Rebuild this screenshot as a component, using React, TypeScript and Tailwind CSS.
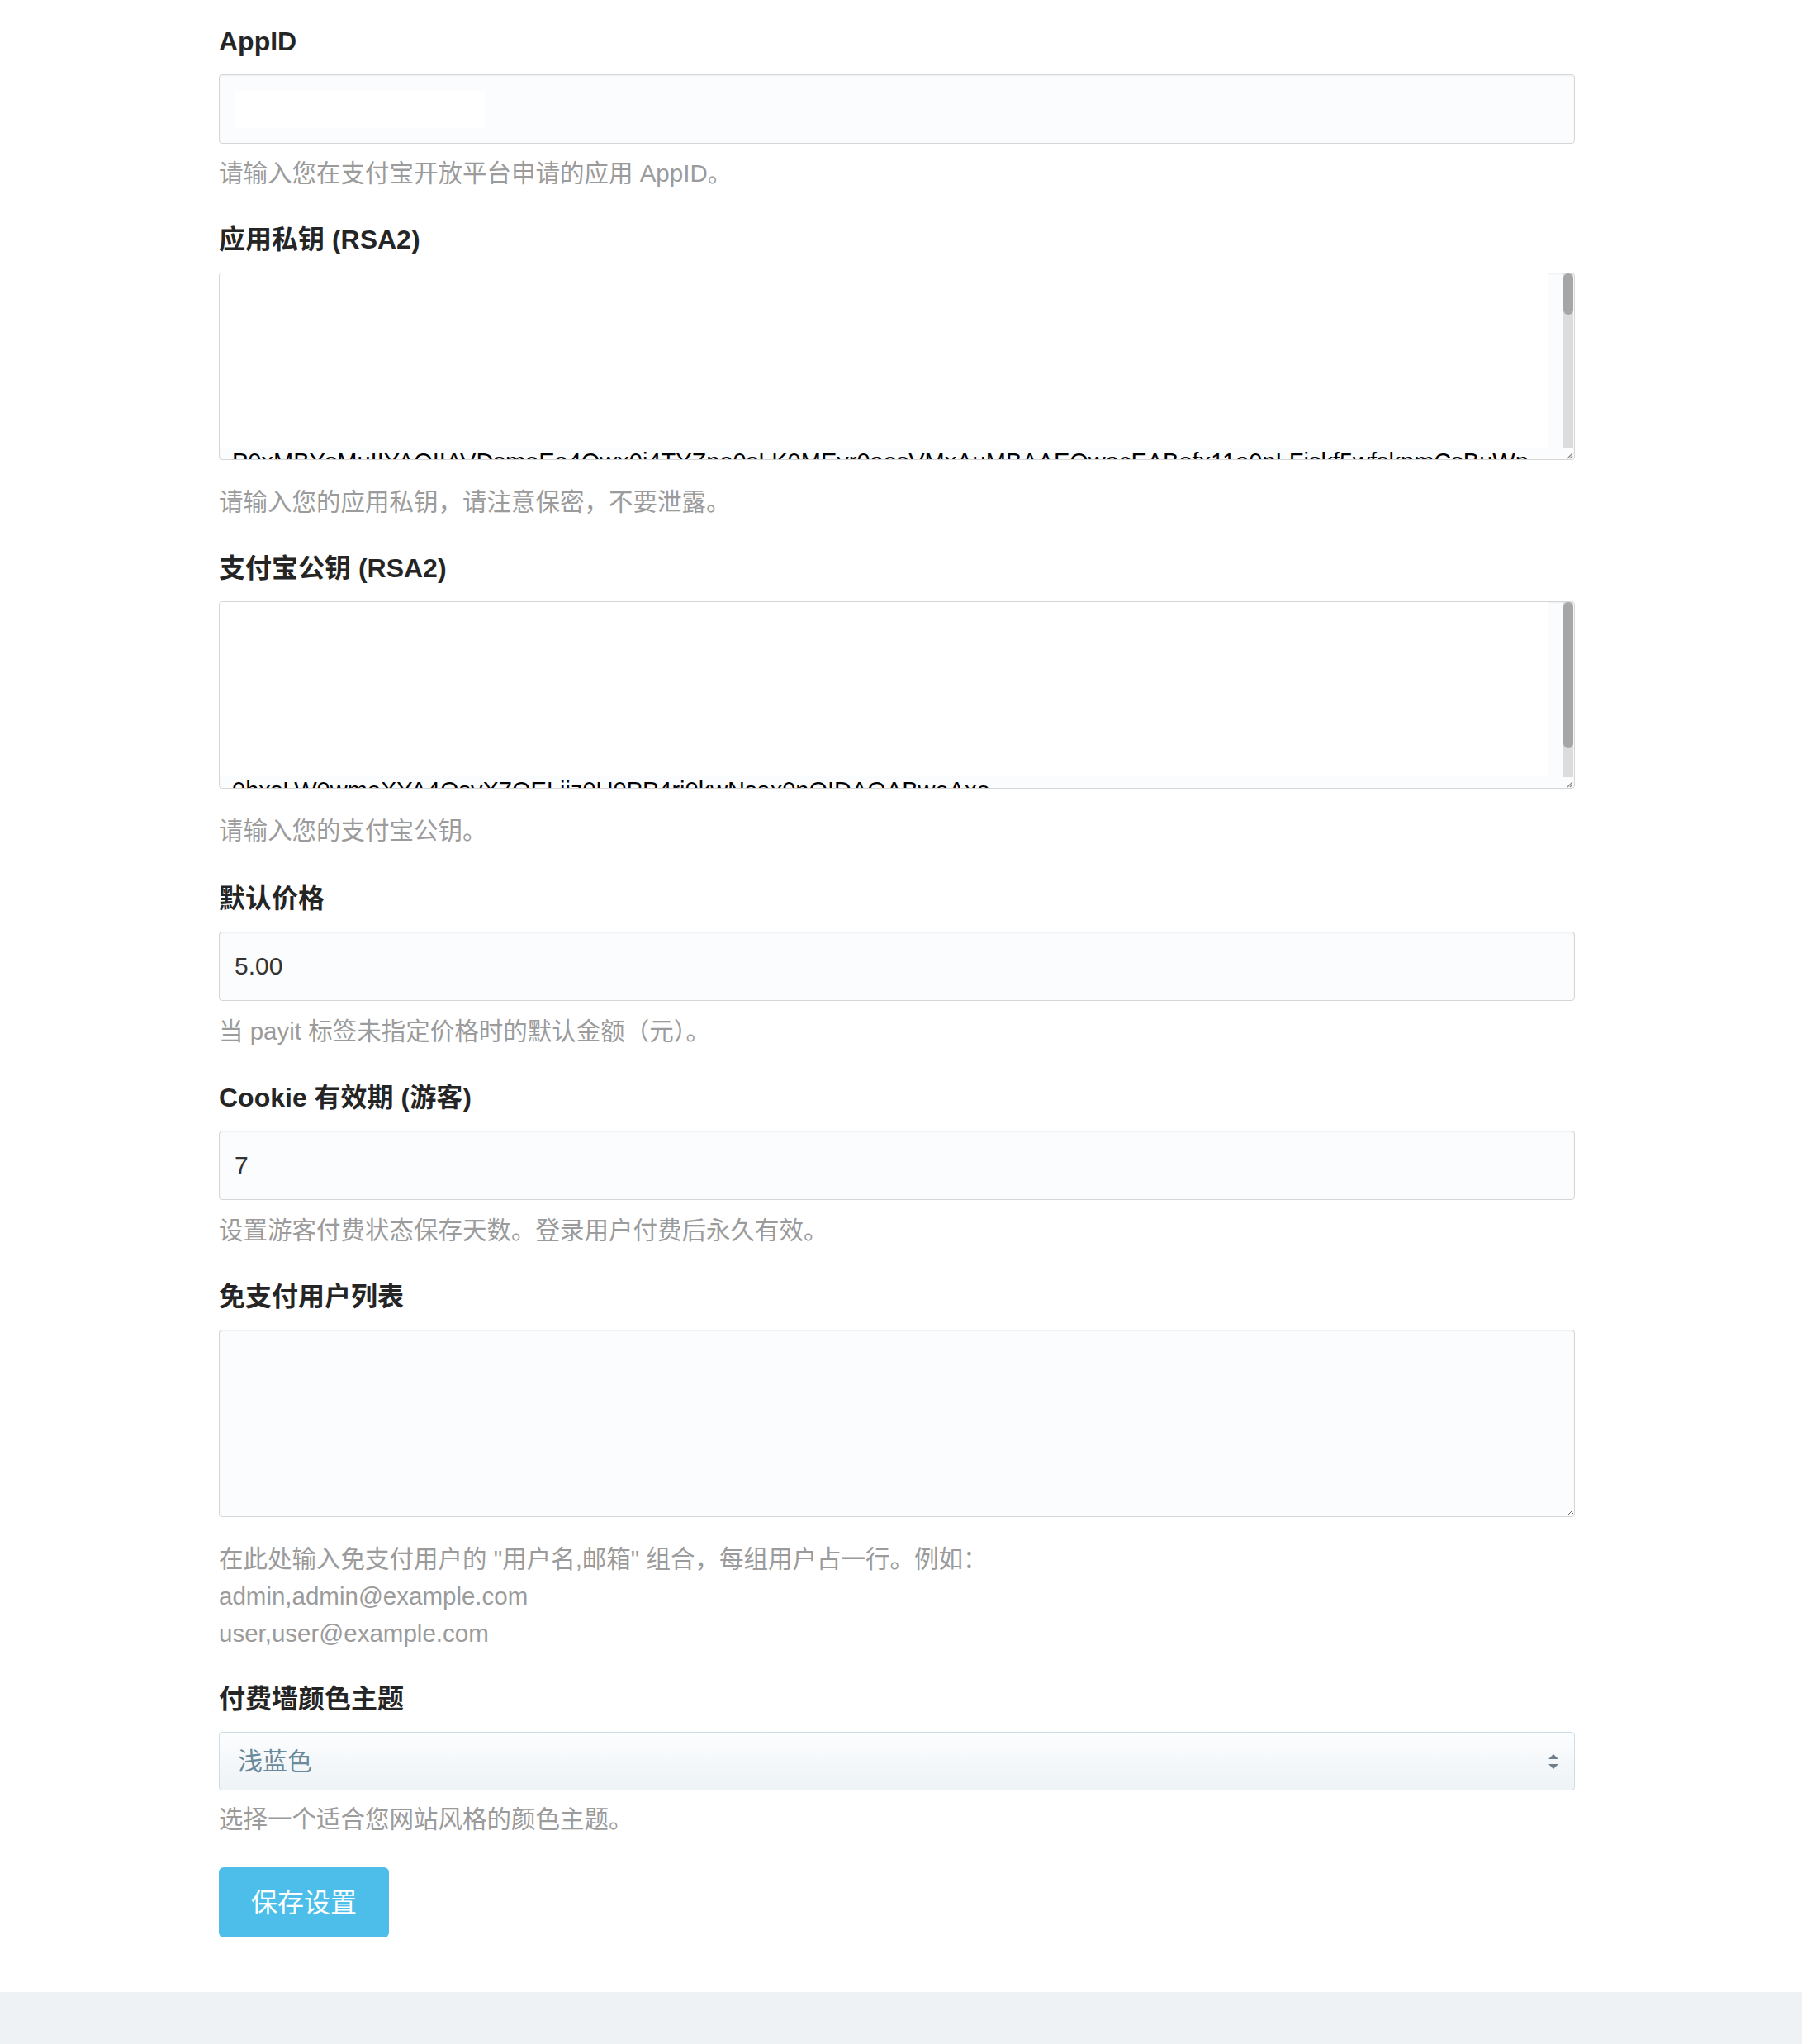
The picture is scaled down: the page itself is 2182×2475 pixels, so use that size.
import React from "react";

const font = "font-['Liberation_Sans','Noto_Sans_CJK_SC',sans-serif]";

function Label({ children }: { children: React.ReactNode }) {
  return <div className="h-[40px] leading-[40px] text-[32px] font-bold text-[#252525]">{children}</div>;
}

function Help({ children, className = "" }: { children: React.ReactNode; className?: string }) {
  return <div className={"text-[29.5px] leading-[44px] text-[#9b9b9b] " + className}>{children}</div>;
}

function ResizeGrip() {
  return (
    <svg width="10" height="10" viewBox="0 0 10 10">
      <line x1="9" y1="3" x2="3" y2="9" stroke="#8a8a8a" strokeWidth="1.2" />
      <line x1="9" y1="6" x2="6" y2="9" stroke="#8a8a8a" strokeWidth="1.2" />
    </svg>
  );
}

// textarea scrolled part way: only the top of one line shows at the bottom
function KeyBox({ line, thumb }: { line: string; thumb: number }) {
  return (
    <div className="mt-[20px] h-[227px] flex overflow-hidden rounded-[4px] border border-[#d6d6d6] bg-[#fbfcfe] shadow-[inset_0_1px_2px_rgba(0,0,0,0.05)]">
      <div className="flex-1 flex flex-col justify-end overflow-hidden">
        <div className="flex-1 bg-white mr-[18px]" />
        <div className="-mb-[21px] pl-[15px] text-[29px] leading-[35px] text-black whitespace-nowrap">{line}</div>
      </div>
      <div className="w-[12px] mr-[1px] flex flex-col">
        <div className="bg-[#dcdcdc] flex-1 flex flex-col">
          <div className="rounded-[6px] bg-[#a6a6a6]" style={{ height: thumb }} />
        </div>
        <div className="h-[13px] flex items-end justify-end">
          <ResizeGrip />
        </div>
      </div>
    </div>
  );
}

const inputCls =
  "mt-[20px] block w-full h-[84px] rounded-[4px] border border-[#d6d6d6] bg-[#fbfcfe] pl-[18px] text-[30px] text-[#333] shadow-[inset_0_1px_2px_rgba(0,0,0,0.05)] outline-none";

export default function App() {
  return (
    <div className={font + " bg-white min-h-[2475px] flex flex-col"}>
      <div className="ml-[265px] w-[1642px] pt-[30px]">
        {/* AppID */}
        <Label>AppID</Label>
        <div className="mt-[20px] h-[84px] rounded-[4px] border border-[#d6d6d6] bg-[#fbfcfe] shadow-[inset_0_1px_2px_rgba(0,0,0,0.05)] pl-[18px] flex items-center">
          <div className="w-[303px] h-[45px] bg-white" />
        </div>
        <Help className="mt-[14px]">请输入您在支付宝开放平台申请的应用 AppID。</Help>

        <div className="mt-[38px]">
          <Label>应用私钥 (RSA2)</Label>
          <KeyBox
            thumb={50}
            line="P0xMBYsMuIIYAOIIAVDsmeEa4Owx0i4TYZne0sLK0MEvr0aesVMxAuMBAAEOwacEABofx11a0nLFiskf5wfsknmCsBuWn"
          />
          <Help className="mt-[29px]">请输入您的应用私钥，请注意保密，不要泄露。</Help>
        </div>

        <div className="mt-[38px]">
          <Label>支付宝公钥 (RSA2)</Label>
          <KeyBox thumb={177} line="0hxsLW0wmeXYA4OsvX7OELiiz0U0PP4ri0kwNsax0nQIDAQABweAxo" />
          <Help className="mt-[29px]">请输入您的支付宝公钥。</Help>
        </div>

        <div className="mt-[40px]">
          <Label>默认价格</Label>
          <input className={inputCls} defaultValue="5.00" />
          <Help className="mt-[15px]">当 payit 标签未指定价格时的默认金额（元）。</Help>
        </div>

        <div className="mt-[38px]">
          <Label>Cookie 有效期 (游客)</Label>
          <input className={inputCls} defaultValue="7" />
          <Help className="mt-[15px]">设置游客付费状态保存天数。登录用户付费后永久有效。</Help>
        </div>

        <div className="mt-[38px]">
          <Label>免支付用户列表</Label>
          <textarea className="mt-[20px] block w-full h-[227px] rounded-[4px] border border-[#d6d6d6] bg-[#fbfcfe] shadow-[inset_0_1px_2px_rgba(0,0,0,0.05)] outline-none" />
          <div className="mt-[28px] text-[29.5px] leading-[45px] text-[#9b9b9b]">
            <div>在此处输入免支付用户的 "用户名,邮箱" 组合，每组用户占一行。例如：</div>
            <div>admin,admin@example.com</div>
            <div>user,user@example.com</div>
          </div>
        </div>

        <div className="mt-[37px]">
          <Label>付费墙颜色主题</Label>
          <div className="mt-[20px] h-[71px] rounded-[4px] border border-[#cbdde5] bg-gradient-to-b from-[#fcfdfe] to-[#eef3f6] pl-[22px] pr-[18px] flex items-center justify-between">
            <span className="text-[30px] text-[#6a8a9b]">浅蓝色</span>
            <svg width="14" height="22" viewBox="0 0 14 22">
              <path d="M7 2 L13 8 L1 8 Z" fill="#6e7f8b" />
              <path d="M1 14 L13 14 L7 20 Z" fill="#6e7f8b" />
            </svg>
          </div>
          <Help className="mt-[13px]">选择一个适合您网站风格的颜色主题。</Help>
        </div>

        <button className="mt-[36px] w-[206px] h-[85px] rounded-[6px] bg-[#4cbee9] text-white text-[32px]">保存设置</button>
      </div>
      <div className="mt-[66px] flex-1 min-h-[60px] bg-[#eef2f5]" />
    </div>
  );
}
